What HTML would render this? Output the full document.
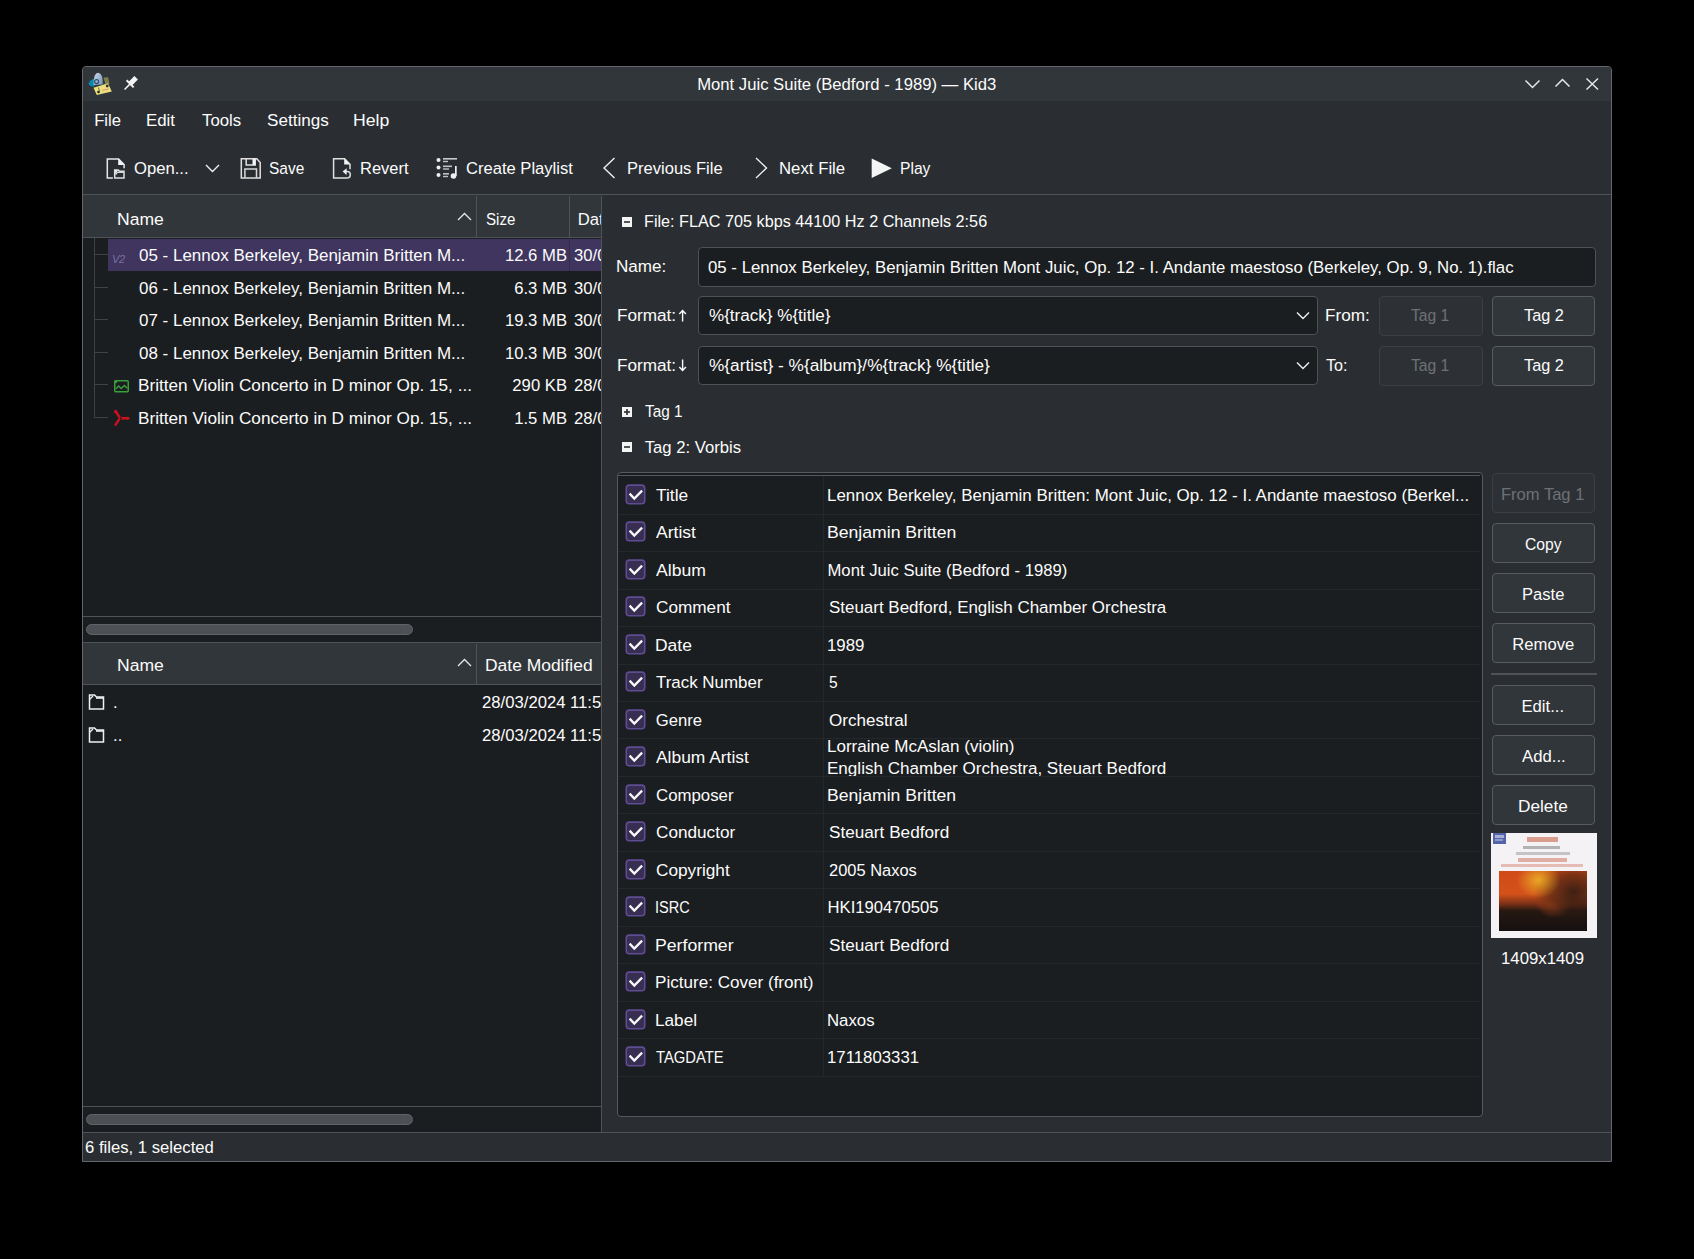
<!DOCTYPE html>
<html><head><meta charset="utf-8"><title>Kid3</title>
<style>
html,body{margin:0;padding:0}
body{background:#000;width:1694px;height:1259px;overflow:hidden;position:relative;font-family:"Liberation Sans",sans-serif;font-size:16.67px;color:#fcfcfc}
.a{position:absolute;display:block}
.t{position:absolute;white-space:nowrap;line-height:20px;height:20px}
</style></head><body>
<div class="a" style="left:82px;top:66px;width:1530px;height:1096px;background:#2a2e32;box-sizing:border-box;border:1px solid #63676b;border-radius:4px 4px 0 0"></div>
<div class="a" style="left:83px;top:67px;width:1528px;height:34px;background:#31363b;border-radius:3px 3px 0 0"></div>
<div class="t" style="left:697.20px;top:75px;color:#fcfcfc;">Mont Juic Suite (Bedford - 1989) — Kid3</div>
<svg class="a" style="left:84px;top:68px;" width="32" height="32" viewBox="0 0 32 32">
<defs><linearGradient id="dome" x1="0" y1="0" x2="1" y2="1"><stop offset="0" stop-color="#d0dcea"/><stop offset="1" stop-color="#6f90b8"/></linearGradient></defs>
<path d="M10.5 10.5 Q5.5 12 4.6 15.5 Q5 18.8 10.5 18.6 Z" fill="#0a88aa"/>
<path d="M9.6 17 Q9.4 5 14.2 4.8 Q18.9 5.2 18.9 16.5 Z" fill="url(#dome)"/>
<circle cx="12.6" cy="13.6" r="2" fill="none" stroke="#2f4a6a" stroke-width="1.1"/>
<path d="M19.5 9.5 L24 9.2 L25.5 15.5 L21.5 16.5 Z" fill="#7e8048"/>
<path d="M9.5 19.8 L24 15.2 L27.8 23.5 L12.8 27 Z" fill="#ece07c"/>
<circle cx="14.5" cy="24" r="1.3" fill="#222"/><circle cx="23.2" cy="18" r="1.4" fill="#333"/>
<path d="M15.5 23.5 L14.5 19.5" stroke="#444" stroke-width=".8"/>
<path d="M18.3 22.3 L24.5 21" stroke="#e0907a" stroke-width="1"/></svg>
<svg class="a" style="left:122px;top:75px;" width="17" height="17" viewBox="0 0 17 17">
<g transform="rotate(45 8.5 8.5)">
<rect x="6" y="0.5" width="5" height="8" fill="#f4f4f4"/>
<rect x="3.5" y="8" width="10" height="2" fill="#f4f4f4"/>
<rect x="7.8" y="9" width="1.5" height="8" fill="#f4f4f4"/>
</g></svg>
<svg class="a" style="left:1520px;top:74px;" width="85" height="22" viewBox="0 0 85 22">
<path d="M5.5 6.5 L12.5 13.5 L19.5 6.5" fill="none" stroke="#e6e6e6" stroke-width="1.5"/>
<path d="M35.5 12.5 L42.5 5.5 L49.5 12.5" fill="none" stroke="#e6e6e6" stroke-width="1.5"/>
<path d="M66.5 4.5 L78 15.5 M78 4.5 L66.5 15.5" fill="none" stroke="#e6e6e6" stroke-width="1.5"/></svg>
<div class="t" style="left:94.20px;top:111px;color:#fcfcfc;">File</div>
<div class="t" style="left:146.19px;top:111px;color:#fcfcfc;transform:scaleX(1.0116);transform-origin:0 0;">Edit</div>
<div class="t" style="left:202.00px;top:111px;color:#fcfcfc;transform:scaleX(1.0064);transform-origin:0 0;">Tools</div>
<div class="t" style="left:267.30px;top:111px;color:#fcfcfc;transform:scaleX(1.0258);transform-origin:0 0;">Settings</div>
<div class="t" style="left:353.14px;top:111px;color:#fcfcfc;transform:scaleX(1.0608);transform-origin:0 0;">Help</div>
<div class="t" style="left:134.00px;top:159px;color:#fcfcfc;">Open...</div>
<div class="t" style="left:269.10px;top:159px;color:#fcfcfc;transform:scaleX(0.9284);transform-origin:0 0;">Save</div>
<div class="t" style="left:360.01px;top:159px;color:#fcfcfc;transform:scaleX(0.9891);transform-origin:0 0;">Revert</div>
<div class="t" style="left:465.80px;top:159px;color:#fcfcfc;transform:scaleX(0.9949);transform-origin:0 0;">Create Playlist</div>
<div class="t" style="left:627.11px;top:159px;color:#fcfcfc;transform:scaleX(0.9936);transform-origin:0 0;">Previous File</div>
<div class="t" style="left:778.69px;top:159px;color:#fcfcfc;transform:scaleX(1.0070);transform-origin:0 0;">Next File</div>
<div class="t" style="left:900.26px;top:159px;color:#fcfcfc;transform:scaleX(0.9385);transform-origin:0 0;">Play</div>
<svg class="a" style="left:105px;top:157px;" width="22" height="23" viewBox="0 0 22 23">
<path d="M7.9 20.9 H2.3 V1.9 H13.6 L19.1 7.5 V11.2" fill="none" stroke="#e8e8e8" stroke-width="1.5"/>
<path d="M13.2 1.6 V7.9 H19.4 Z" fill="#f4f4f4"/>
<path d="M9.7 20.9 V12.9 H13.2 L14.6 14.3 H19 V20.9 Z" fill="none" stroke="#e0e0e0" stroke-width="1.5"/>
<path d="M10 13.2 H13 L10.4 17.2 Z" fill="#f4f4f4"/>
<path d="M10.6 17.6 L12.4 15.4 H18.6" fill="none" stroke="#d8d8d8" stroke-width="1.4"/></svg>
<svg class="a" style="left:204px;top:162px;" width="18" height="13" viewBox="0 0 18 13"><path d="M2 3 L8.5 9.5 L15 3" fill="none" stroke="#f0f0f0" stroke-width="1.4"/></svg>
<svg class="a" style="left:239px;top:157px;" width="23" height="23" viewBox="0 0 23 23">
<path d="M2.3 1.7 H17.8 L21.2 5.5 V20.9 H2.3 Z" fill="none" stroke="#e0e0e0" stroke-width="1.5"/>
<path d="M7.2 1.7 V8.1 H16.2 V1.7" fill="none" stroke="#e0e0e0" stroke-width="1.5"/>
<rect x="13.5" y="1.8" width="2.9" height="6.3" fill="#f4f4f4"/>
<path d="M5.9 20.9 V12.1 H17.5 V20.9" fill="none" stroke="#d8d8d8" stroke-width="1.5"/></svg>
<svg class="a" style="left:331px;top:157px;" width="22" height="23" viewBox="0 0 22 23">
<path d="M16.2 20.9 H2.6 V1.8 H13.6 L19 7.3 V12.3" fill="none" stroke="#e0e0e0" stroke-width="1.5"/>
<path d="M13.2 1.6 V7.6 H19.3 Z" fill="#f4f4f4"/>
<path d="M16.2 20.9 A3.15 3.15 0 0 0 16.2 14.6 H15" fill="none" stroke="#d8d8d8" stroke-width="1.5"/>
<path d="M11.6 14.6 L15.6 11.2 V18 Z" fill="#f0f0f0"/></svg>
<svg class="a" style="left:435px;top:156px;" width="24" height="24" viewBox="0 0 24 24">
<circle cx="3.5" cy="4" r="2" fill="#f0f0f0"/><circle cx="3.5" cy="11.5" r="2" fill="#f0f0f0"/><circle cx="3.5" cy="19" r="2" fill="#f0f0f0"/>
<rect x="8" y="2" width="14" height="1.6" fill="#c8c9ca"/><rect x="8" y="4.8" width="5" height="1.4" fill="#c0c1c2"/>
<rect x="8" y="9.5" width="9" height="1.6" fill="#c0c1c2"/><rect x="8" y="12.3" width="6" height="1.4" fill="#c0c1c2"/>
<rect x="8" y="17" width="6" height="1.6" fill="#c0c1c2"/><rect x="8" y="19.8" width="5" height="1.4" fill="#c0c1c2"/>
<rect x="20" y="10" width="1.7" height="10" fill="#f0f0f0"/><circle cx="18.5" cy="20" r="2.8" fill="#f0f0f0"/></svg>
<svg class="a" style="left:600px;top:155px;" width="20" height="26" viewBox="0 0 20 26"><path d="M14.5 3 L4 13 L14.5 23" fill="none" stroke="#f0f0f0" stroke-width="1.4"/></svg>
<svg class="a" style="left:752px;top:155px;" width="20" height="26" viewBox="0 0 20 26"><path d="M4 3 L14.5 13 L4 23" fill="none" stroke="#f0f0f0" stroke-width="1.4"/></svg>
<svg class="a" style="left:870px;top:156px;" width="24" height="24" viewBox="0 0 24 24"><path d="M1.7 2.6 L21.8 12.3 L1.7 22.1 Z" fill="#f4f4f4"/></svg>
<div class="a" style="left:83px;top:194px;width:1528px;height:1px;background:#4f5357;"></div>
<div class="a" style="left:83px;top:195px;width:518px;height:42px;background:#31363b;"></div>
<div class="a" style="left:83px;top:237px;width:518px;height:1px;background:#4f5357;"></div>
<div class="a" style="left:83px;top:238px;width:518px;height:378px;background:#1b1e20;"></div>
<div class="a" style="left:476px;top:196px;width:1px;height:42px;background:#4f5357;"></div>
<div class="a" style="left:569px;top:196px;width:1px;height:42px;background:#4f5357;"></div>
<div class="t" style="left:116.95px;top:210px;color:#fcfcfc;transform:scaleX(1.0541);transform-origin:0 0;">Name</div>
<div class="t" style="left:485.70px;top:210px;color:#fcfcfc;transform:scaleX(0.9086);transform-origin:0 0;">Size</div>
<div class="a" style="left:0;top:0;width:601px;height:1259px;overflow:hidden"><div class="t" style="left:577.70px;top:210px;color:#fcfcfc;">Date Modified</div></div>
<svg class="a" style="left:455px;top:209px;" width="18" height="14" viewBox="0 0 18 14"><path d="M3 11 L9.5 4.5 L16 11" fill="none" stroke="#e8e8e8" stroke-width="1.3"/></svg>
<div class="a" style="left:108px;top:239px;width:493px;height:32px;background:#3f355e;"></div>
<div class="a" style="left:569px;top:238px;width:1px;height:33px;background:#342c4e;"></div>
<div class="a" style="left:94px;top:238px;width:1px;height:180px;background:#3e4246;"></div>
<div class="a" style="left:95px;top:254px;width:13px;height:1px;background:#3e4246;"></div>
<div class="a" style="left:95px;top:287px;width:13px;height:1px;background:#3e4246;"></div>
<div class="a" style="left:95px;top:319px;width:13px;height:1px;background:#3e4246;"></div>
<div class="a" style="left:95px;top:352px;width:13px;height:1px;background:#3e4246;"></div>
<div class="a" style="left:95px;top:384px;width:13px;height:1px;background:#3e4246;"></div>
<div class="a" style="left:95px;top:417px;width:13px;height:1px;background:#3e4246;"></div>
<div class="t" style="left:139.30px;top:246px;color:#fcfcfc;transform:scaleX(1.0195);transform-origin:0 0;">05 - Lennox Berkeley, Benjamin Britten M...</div>
<div class="t" style="left:470px;top:246px;width:97px;text-align:right">12.6 MB</div>
<div class="a" style="left:0;top:0;width:601px;height:1259px;overflow:hidden"><div class="t" style="left:574.00px;top:246px;color:#fcfcfc;">30/03/2024</div></div>
<div class="t" style="left:139.30px;top:279px;color:#fcfcfc;transform:scaleX(1.0195);transform-origin:0 0;">06 - Lennox Berkeley, Benjamin Britten M...</div>
<div class="t" style="left:470px;top:279px;width:97px;text-align:right">6.3 MB</div>
<div class="a" style="left:0;top:0;width:601px;height:1259px;overflow:hidden"><div class="t" style="left:574.00px;top:279px;color:#fcfcfc;">30/03/2024</div></div>
<div class="t" style="left:139.30px;top:311px;color:#fcfcfc;transform:scaleX(1.0195);transform-origin:0 0;">07 - Lennox Berkeley, Benjamin Britten M...</div>
<div class="t" style="left:470px;top:311px;width:97px;text-align:right">19.3 MB</div>
<div class="a" style="left:0;top:0;width:601px;height:1259px;overflow:hidden"><div class="t" style="left:574.00px;top:311px;color:#fcfcfc;">30/03/2024</div></div>
<div class="t" style="left:139.30px;top:344px;color:#fcfcfc;transform:scaleX(1.0195);transform-origin:0 0;">08 - Lennox Berkeley, Benjamin Britten M...</div>
<div class="t" style="left:470px;top:344px;width:97px;text-align:right">10.3 MB</div>
<div class="a" style="left:0;top:0;width:601px;height:1259px;overflow:hidden"><div class="t" style="left:574.00px;top:344px;color:#fcfcfc;">30/03/2024</div></div>
<div class="t" style="left:137.77px;top:376px;color:#fcfcfc;transform:scaleX(1.0317);transform-origin:0 0;">Britten Violin Concerto in D minor Op. 15, ...</div>
<div class="t" style="left:470px;top:376px;width:97px;text-align:right">290 KB</div>
<div class="a" style="left:0;top:0;width:601px;height:1259px;overflow:hidden"><div class="t" style="left:574.00px;top:376px;color:#fcfcfc;">28/03/2024</div></div>
<div class="t" style="left:137.77px;top:409px;color:#fcfcfc;transform:scaleX(1.0317);transform-origin:0 0;">Britten Violin Concerto in D minor Op. 15, ...</div>
<div class="t" style="left:470px;top:409px;width:97px;text-align:right">1.5 MB</div>
<div class="a" style="left:0;top:0;width:601px;height:1259px;overflow:hidden"><div class="t" style="left:574.00px;top:409px;color:#fcfcfc;">28/03/2024</div></div>
<div class="t" style="left:112px;top:252px;color:#7d70a0;font-size:11px;line-height:14px;height:14px;letter-spacing:-0.3px;font-style:italic">V2</div>
<svg class="a" style="left:112px;top:378px;" width="19" height="16" viewBox="0 0 19 16"><rect x="2.75" y="2.75" width="13.5" height="11" rx="1" fill="none" stroke="#3a9e3e" stroke-width="1.5"/>
<path d="M4 10.8 L6.6 8 L9.2 10.6 L12.4 7.4 L15.2 10.2" fill="none" stroke="#3a9e3e" stroke-width="1.4"/>
<rect x="2.5" y="2.5" width="2.5" height="2.5" fill="#3a9e3e"/></svg>
<svg class="a" style="left:112px;top:409px;" width="18" height="18" viewBox="0 0 18 18"><path d="M8 9 L3.5 2 M8 9 L3.5 15.8 M8 9 L16.5 9.3" fill="none" stroke="#cc1020" stroke-width="2.4" stroke-linecap="round"/>
<path d="M3.5 2 L2.5 4 M3.5 2 L5.5 2.5 M16.5 9.3 L15 8 M16.5 9.3 L15 10.6" fill="none" stroke="#cc1020" stroke-width="1.2"/>
<circle cx="8.6" cy="9.2" r="1" fill="#1b1e20"/></svg>
<div class="a" style="left:83px;top:616px;width:518px;height:1px;background:#4f5357;"></div>
<div class="a" style="left:83px;top:617px;width:518px;height:25px;background:#1b1e20;"></div>
<div class="a" style="left:86px;top:624px;width:327px;height:11px;background:#4d5155;box-sizing:border-box;border:1px solid #606467;border-radius:6px"></div>
<div class="a" style="left:83px;top:642px;width:518px;height:1px;background:#4f5357;"></div>
<div class="a" style="left:83px;top:643px;width:518px;height:41px;background:#31363b;"></div>
<div class="a" style="left:83px;top:684px;width:518px;height:1px;background:#4f5357;"></div>
<div class="a" style="left:476px;top:644px;width:1px;height:41px;background:#4f5357;"></div>
<div class="t" style="left:117.35px;top:656px;color:#fcfcfc;transform:scaleX(1.0541);transform-origin:0 0;">Name</div>
<div class="t" style="left:485.15px;top:656px;color:#fcfcfc;transform:scaleX(1.0472);transform-origin:0 0;">Date Modified</div>
<svg class="a" style="left:455px;top:655px;" width="18" height="14" viewBox="0 0 18 14"><path d="M3 11 L9.5 4.5 L16 11" fill="none" stroke="#e8e8e8" stroke-width="1.3"/></svg>
<div class="a" style="left:83px;top:685px;width:518px;height:421px;background:#1b1e20;"></div>
<svg class="a" style="left:88px;top:693px;" width="18" height="18" viewBox="0 0 18 18"><path d="M1.5 2 H6.5 L8.5 4 H15.5 V16 H1.5 Z" fill="none" stroke="#f0f0f0" stroke-width="1.5"/>
<path d="M1.5 6.5 L5 3" stroke="#f0f0f0" stroke-width="1.3"/><path d="M8 5 H15.5" stroke="#f0f0f0" stroke-width="1.6"/></svg>
<div class="t" style="left:113px;top:693px">.</div>
<div class="a" style="left:0;top:0;width:601px;height:1259px;overflow:hidden"><div class="t" style="left:482.10px;top:693px;color:#fcfcfc;">28/03/2024 11:53</div></div>
<svg class="a" style="left:88px;top:726px;" width="18" height="18" viewBox="0 0 18 18"><path d="M1.5 2 H6.5 L8.5 4 H15.5 V16 H1.5 Z" fill="none" stroke="#f0f0f0" stroke-width="1.5"/>
<path d="M1.5 6.5 L5 3" stroke="#f0f0f0" stroke-width="1.3"/><path d="M8 5 H15.5" stroke="#f0f0f0" stroke-width="1.6"/></svg>
<div class="t" style="left:113px;top:726px">..</div>
<div class="a" style="left:0;top:0;width:601px;height:1259px;overflow:hidden"><div class="t" style="left:482.10px;top:726px;color:#fcfcfc;">28/03/2024 11:53</div></div>
<div class="a" style="left:83px;top:1106px;width:518px;height:1px;background:#4f5357;"></div>
<div class="a" style="left:83px;top:1107px;width:518px;height:25px;background:#1b1e20;"></div>
<div class="a" style="left:86px;top:1114px;width:327px;height:11px;background:#4d5155;box-sizing:border-box;border:1px solid #606467;border-radius:6px"></div>
<div class="a" style="left:601px;top:196px;width:1px;height:936px;background:#4f5357;"></div>
<div class="a" style="left:83px;top:1132px;width:1528px;height:1px;background:#4f5357;"></div>
<div class="t" style="left:85.10px;top:1138px;color:#fcfcfc;">6 files, 1 selected</div>
<svg class="a" style="left:622px;top:217px;" width="10" height="10" viewBox="0 0 10 10"><rect x="0" y="0" width="10" height="10" fill="#f4f4f4"/><rect x="2" y="4.2" width="6" height="1.6" fill="#2a2e32"/></svg>
<div class="t" style="left:644.23px;top:212px;color:#fcfcfc;transform:scaleX(0.9727);transform-origin:0 0;">File: FLAC 705 kbps 44100 Hz 2 Channels 2:56</div>
<div class="t" style="left:616.47px;top:257px;color:#fcfcfc;transform:scaleX(1.0268);transform-origin:0 0;">Name:</div>
<div class="a" style="left:698px;top:247px;width:898px;height:40px;background:#1b1e20;box-sizing:border-box;border:1px solid #4e5256;border-radius:4px"></div>
<div class="t" style="left:708.20px;top:258px;color:#fcfcfc;transform:scaleX(1.0091);transform-origin:0 0;">05 - Lennox Berkeley, Benjamin Britten Mont Juic, Op. 12 - I. Andante maestoso (Berkeley, Op. 9, No. 1).flac</div>
<div class="t" style="left:616.77px;top:306px;color:#fcfcfc;transform:scaleX(1.0296);transform-origin:0 0;">Format:</div>
<svg class="a" style="left:678px;top:309px;" width="10" height="14" viewBox="0 0 10 14"><path d="M4.6 1.5 V12.6 M1.3 5 L4.6 1.5 L7.9 5" fill="none" stroke="#fcfcfc" stroke-width="1.4"/></svg>
<div class="a" style="left:698px;top:296px;width:620px;height:39px;background:#1b1e20;box-sizing:border-box;border:1px solid #4e5256;border-radius:4px"></div>
<div class="t" style="left:708.50px;top:306px;color:#fcfcfc;transform:scaleX(1.0240);transform-origin:0 0;">%{track} %{title}</div>
<svg class="a" style="left:1295px;top:310px;" width="16" height="11" viewBox="0 0 16 11"><path d="M2 2.5 L8 8.5 L14 2.5" fill="none" stroke="#f0f0f0" stroke-width="1.4"/></svg>
<div class="t" style="left:1325.37px;top:306px;color:#fcfcfc;transform:scaleX(1.0320);transform-origin:0 0;">From:</div>
<div class="a" style="left:1379px;top:296px;width:104px;height:40px;background:#2d3135;box-sizing:border-box;border:1px solid #3c4044;border-radius:4px"></div>
<div class="t" style="left:1411.00px;top:306px;color:#6d7175;transform:scaleX(0.9387);transform-origin:0 0;">Tag 1</div>
<div class="a" style="left:1492px;top:296px;width:103px;height:40px;background:#31363b;box-sizing:border-box;border:1px solid #585c60;border-radius:4px"></div>
<div class="t" style="left:1523.50px;top:306px;color:#fcfcfc;transform:scaleX(0.9758);transform-origin:0 0;">Tag 2</div>
<div class="t" style="left:616.77px;top:356px;color:#fcfcfc;transform:scaleX(1.0296);transform-origin:0 0;">Format:</div>
<svg class="a" style="left:678px;top:359px;" width="10" height="14" viewBox="0 0 10 14"><path d="M4.6 0.4 V11.5 M1.3 8 L4.6 11.5 L7.9 8" fill="none" stroke="#fcfcfc" stroke-width="1.4"/></svg>
<div class="a" style="left:698px;top:346px;width:620px;height:39px;background:#1b1e20;box-sizing:border-box;border:1px solid #4e5256;border-radius:4px"></div>
<div class="t" style="left:708.50px;top:356px;color:#fcfcfc;transform:scaleX(1.0353);transform-origin:0 0;">%{artist} - %{album}/%{track} %{title}</div>
<svg class="a" style="left:1295px;top:360px;" width="16" height="11" viewBox="0 0 16 11"><path d="M2 2.5 L8 8.5 L14 2.5" fill="none" stroke="#f0f0f0" stroke-width="1.4"/></svg>
<div class="t" style="left:1326.40px;top:356px;color:#fcfcfc;transform:scaleX(0.9680);transform-origin:0 0;">To:</div>
<div class="a" style="left:1379px;top:346px;width:104px;height:40px;background:#2d3135;box-sizing:border-box;border:1px solid #3c4044;border-radius:4px"></div>
<div class="t" style="left:1411.00px;top:356px;color:#6d7175;transform:scaleX(0.9387);transform-origin:0 0;">Tag 1</div>
<div class="a" style="left:1492px;top:346px;width:103px;height:40px;background:#31363b;box-sizing:border-box;border:1px solid #585c60;border-radius:4px"></div>
<div class="t" style="left:1523.50px;top:356px;color:#fcfcfc;transform:scaleX(0.9758);transform-origin:0 0;">Tag 2</div>
<svg class="a" style="left:622px;top:407px;" width="10" height="10" viewBox="0 0 10 10"><rect x="0" y="0" width="10" height="10" fill="#f4f4f4"/><rect x="2" y="4.2" width="6" height="1.6" fill="#2a2e32"/><rect x="4.2" y="2" width="1.6" height="6" fill="#2a2e32"/></svg>
<div class="t" style="left:644.70px;top:402px;color:#fcfcfc;transform:scaleX(0.9214);transform-origin:0 0;">Tag 1</div>
<svg class="a" style="left:622px;top:442px;" width="10" height="10" viewBox="0 0 10 10"><rect x="0" y="0" width="10" height="10" fill="#f4f4f4"/><rect x="2" y="4.2" width="6" height="1.6" fill="#2a2e32"/></svg>
<div class="t" style="left:644.70px;top:438px;color:#fcfcfc;">Tag 2: Vorbis</div>
<div class="a" style="left:617px;top:472px;width:866px;height:645px;background:#1b1e20;box-sizing:border-box;border:1px solid #55595d;border-radius:4px"></div>
<div class="a" style="left:618px;top:475px;width:862px;height:1px;background:#55595d;"></div>
<div class="a" style="left:823px;top:476px;width:1px;height:600px;background:#25282b;"></div>
<div class="a" style="left:618px;top:514px;width:862px;height:1px;background:#25282b;"></div>
<svg class="a" style="left:625px;top:484px;" width="21" height="21" viewBox="0 0 21 21"><rect x="1.3" y="1.1" width="18.4" height="18.6" rx="3" fill="#372e52" stroke="#5f4c94" stroke-width="1.6"/><path d="M4.6 9.6 L9.3 14.6 L17.1 6.6" fill="none" stroke="#f8f8f8" stroke-width="2.3"/></svg>
<div class="t" style="left:655.70px;top:486px;color:#fcfcfc;transform:scaleX(1.0430);transform-origin:0 0;">Title</div>
<div class="t" style="left:827.48px;top:486px;color:#fcfcfc;transform:scaleX(1.0160);transform-origin:0 0;">Lennox Berkeley, Benjamin Britten: Mont Juic, Op. 12 - I. Andante maestoso (Berkel...</div>
<div class="a" style="left:618px;top:551px;width:862px;height:1px;background:#25282b;"></div>
<svg class="a" style="left:625px;top:521px;" width="21" height="21" viewBox="0 0 21 21"><rect x="1.3" y="1.1" width="18.4" height="18.6" rx="3" fill="#372e52" stroke="#5f4c94" stroke-width="1.6"/><path d="M4.6 9.6 L9.3 14.6 L17.1 6.6" fill="none" stroke="#f8f8f8" stroke-width="2.3"/></svg>
<div class="t" style="left:655.70px;top:523px;color:#fcfcfc;transform:scaleX(1.0519);transform-origin:0 0;">Artist</div>
<div class="t" style="left:827.44px;top:523px;color:#fcfcfc;transform:scaleX(1.0575);transform-origin:0 0;">Benjamin Britten</div>
<div class="a" style="left:618px;top:589px;width:862px;height:1px;background:#25282b;"></div>
<svg class="a" style="left:625px;top:559px;" width="21" height="21" viewBox="0 0 21 21"><rect x="1.3" y="1.1" width="18.4" height="18.6" rx="3" fill="#372e52" stroke="#5f4c94" stroke-width="1.6"/><path d="M4.6 9.6 L9.3 14.6 L17.1 6.6" fill="none" stroke="#f8f8f8" stroke-width="2.3"/></svg>
<div class="t" style="left:655.70px;top:561px;color:#fcfcfc;transform:scaleX(1.0575);transform-origin:0 0;">Album</div>
<div class="t" style="left:827.50px;top:561px;color:#fcfcfc;">Mont Juic Suite (Bedford - 1989)</div>
<div class="a" style="left:618px;top:626px;width:862px;height:1px;background:#25282b;"></div>
<svg class="a" style="left:625px;top:596px;" width="21" height="21" viewBox="0 0 21 21"><rect x="1.3" y="1.1" width="18.4" height="18.6" rx="3" fill="#372e52" stroke="#5f4c94" stroke-width="1.6"/><path d="M4.6 9.6 L9.3 14.6 L17.1 6.6" fill="none" stroke="#f8f8f8" stroke-width="2.3"/></svg>
<div class="t" style="left:655.70px;top:598px;color:#fcfcfc;transform:scaleX(1.0321);transform-origin:0 0;">Comment</div>
<div class="t" style="left:828.50px;top:598px;color:#fcfcfc;transform:scaleX(1.0176);transform-origin:0 0;">Steuart Bedford, English Chamber Orchestra</div>
<div class="a" style="left:618px;top:664px;width:862px;height:1px;background:#25282b;"></div>
<svg class="a" style="left:625px;top:634px;" width="21" height="21" viewBox="0 0 21 21"><rect x="1.3" y="1.1" width="18.4" height="18.6" rx="3" fill="#372e52" stroke="#5f4c94" stroke-width="1.6"/><path d="M4.6 9.6 L9.3 14.6 L17.1 6.6" fill="none" stroke="#f8f8f8" stroke-width="2.3"/></svg>
<div class="t" style="left:654.65px;top:636px;color:#fcfcfc;transform:scaleX(1.0466);transform-origin:0 0;">Date</div>
<div class="t" style="left:827.49px;top:636px;color:#fcfcfc;transform:scaleX(1.0114);transform-origin:0 0;">1989</div>
<div class="a" style="left:618px;top:701px;width:862px;height:1px;background:#25282b;"></div>
<svg class="a" style="left:625px;top:671px;" width="21" height="21" viewBox="0 0 21 21"><rect x="1.3" y="1.1" width="18.4" height="18.6" rx="3" fill="#372e52" stroke="#5f4c94" stroke-width="1.6"/><path d="M4.6 9.6 L9.3 14.6 L17.1 6.6" fill="none" stroke="#f8f8f8" stroke-width="2.3"/></svg>
<div class="t" style="left:655.70px;top:673px;color:#fcfcfc;transform:scaleX(1.0157);transform-origin:0 0;">Track Number</div>
<div class="t" style="left:828.50px;top:673px;color:#fcfcfc;transform:scaleX(0.9333);transform-origin:0 0;">5</div>
<div class="a" style="left:618px;top:738px;width:862px;height:1px;background:#25282b;"></div>
<svg class="a" style="left:625px;top:709px;" width="21" height="21" viewBox="0 0 21 21"><rect x="1.3" y="1.1" width="18.4" height="18.6" rx="3" fill="#372e52" stroke="#5f4c94" stroke-width="1.6"/><path d="M4.6 9.6 L9.3 14.6 L17.1 6.6" fill="none" stroke="#f8f8f8" stroke-width="2.3"/></svg>
<div class="t" style="left:655.70px;top:711px;color:#fcfcfc;">Genre</div>
<div class="t" style="left:828.50px;top:711px;color:#fcfcfc;transform:scaleX(1.0233);transform-origin:0 0;">Orchestral</div>
<div class="a" style="left:618px;top:776px;width:862px;height:1px;background:#25282b;"></div>
<svg class="a" style="left:625px;top:746px;" width="21" height="21" viewBox="0 0 21 21"><rect x="1.3" y="1.1" width="18.4" height="18.6" rx="3" fill="#372e52" stroke="#5f4c94" stroke-width="1.6"/><path d="M4.6 9.6 L9.3 14.6 L17.1 6.6" fill="none" stroke="#f8f8f8" stroke-width="2.3"/></svg>
<div class="t" style="left:655.70px;top:748px;color:#fcfcfc;transform:scaleX(1.0449);transform-origin:0 0;">Album Artist</div>
<div class="a" style="left:824px;top:739px;width:655px;height:37px;overflow:hidden">
<div class="t" style="left:3.48px;top:-2px;color:#fcfcfc;transform:scaleX(1.0224);transform-origin:0 0;">Lorraine McAslan (violin)</div>
<div class="t" style="left:3.48px;top:20px;color:#fcfcfc;transform:scaleX(1.0237);transform-origin:0 0;">English Chamber Orchestra, Steuart Bedford</div>
</div>
<div class="a" style="left:618px;top:813px;width:862px;height:1px;background:#25282b;"></div>
<svg class="a" style="left:625px;top:784px;" width="21" height="21" viewBox="0 0 21 21"><rect x="1.3" y="1.1" width="18.4" height="18.6" rx="3" fill="#372e52" stroke="#5f4c94" stroke-width="1.6"/><path d="M4.6 9.6 L9.3 14.6 L17.1 6.6" fill="none" stroke="#f8f8f8" stroke-width="2.3"/></svg>
<div class="t" style="left:655.70px;top:786px;color:#fcfcfc;transform:scaleX(1.0092);transform-origin:0 0;">Composer</div>
<div class="t" style="left:827.44px;top:786px;color:#fcfcfc;transform:scaleX(1.0567);transform-origin:0 0;">Benjamin Britten</div>
<div class="a" style="left:618px;top:851px;width:862px;height:1px;background:#25282b;"></div>
<svg class="a" style="left:625px;top:821px;" width="21" height="21" viewBox="0 0 21 21"><rect x="1.3" y="1.1" width="18.4" height="18.6" rx="3" fill="#372e52" stroke="#5f4c94" stroke-width="1.6"/><path d="M4.6 9.6 L9.3 14.6 L17.1 6.6" fill="none" stroke="#f8f8f8" stroke-width="2.3"/></svg>
<div class="t" style="left:655.70px;top:823px;color:#fcfcfc;transform:scaleX(1.0310);transform-origin:0 0;">Conductor</div>
<div class="t" style="left:828.50px;top:823px;color:#fcfcfc;transform:scaleX(1.0309);transform-origin:0 0;">Steuart Bedford</div>
<div class="a" style="left:618px;top:888px;width:862px;height:1px;background:#25282b;"></div>
<svg class="a" style="left:625px;top:859px;" width="21" height="21" viewBox="0 0 21 21"><rect x="1.3" y="1.1" width="18.4" height="18.6" rx="3" fill="#372e52" stroke="#5f4c94" stroke-width="1.6"/><path d="M4.6 9.6 L9.3 14.6 L17.1 6.6" fill="none" stroke="#f8f8f8" stroke-width="2.3"/></svg>
<div class="t" style="left:655.70px;top:861px;color:#fcfcfc;transform:scaleX(1.0341);transform-origin:0 0;">Copyright</div>
<div class="t" style="left:828.50px;top:861px;color:#fcfcfc;transform:scaleX(0.9880);transform-origin:0 0;">2005 Naxos</div>
<div class="a" style="left:618px;top:926px;width:862px;height:1px;background:#25282b;"></div>
<svg class="a" style="left:625px;top:896px;" width="21" height="21" viewBox="0 0 21 21"><rect x="1.3" y="1.1" width="18.4" height="18.6" rx="3" fill="#372e52" stroke="#5f4c94" stroke-width="1.6"/><path d="M4.6 9.6 L9.3 14.6 L17.1 6.6" fill="none" stroke="#f8f8f8" stroke-width="2.3"/></svg>
<div class="t" style="left:654.83px;top:898px;color:#fcfcfc;transform:scaleX(0.8719);transform-origin:0 0;">ISRC</div>
<div class="t" style="left:827.50px;top:898px;color:#fcfcfc;">HKI190470505</div>
<div class="a" style="left:618px;top:963px;width:862px;height:1px;background:#25282b;"></div>
<svg class="a" style="left:625px;top:934px;" width="21" height="21" viewBox="0 0 21 21"><rect x="1.3" y="1.1" width="18.4" height="18.6" rx="3" fill="#372e52" stroke="#5f4c94" stroke-width="1.6"/><path d="M4.6 9.6 L9.3 14.6 L17.1 6.6" fill="none" stroke="#f8f8f8" stroke-width="2.3"/></svg>
<div class="t" style="left:654.64px;top:936px;color:#fcfcfc;transform:scaleX(1.0613);transform-origin:0 0;">Performer</div>
<div class="t" style="left:828.50px;top:936px;color:#fcfcfc;transform:scaleX(1.0309);transform-origin:0 0;">Steuart Bedford</div>
<div class="a" style="left:618px;top:1001px;width:862px;height:1px;background:#25282b;"></div>
<svg class="a" style="left:625px;top:971px;" width="21" height="21" viewBox="0 0 21 21"><rect x="1.3" y="1.1" width="18.4" height="18.6" rx="3" fill="#372e52" stroke="#5f4c94" stroke-width="1.6"/><path d="M4.6 9.6 L9.3 14.6 L17.1 6.6" fill="none" stroke="#f8f8f8" stroke-width="2.3"/></svg>
<div class="t" style="left:654.67px;top:973px;color:#fcfcfc;transform:scaleX(1.0253);transform-origin:0 0;">Picture: Cover (front)</div>
<div class="a" style="left:618px;top:1038px;width:862px;height:1px;background:#25282b;"></div>
<svg class="a" style="left:625px;top:1009px;" width="21" height="21" viewBox="0 0 21 21"><rect x="1.3" y="1.1" width="18.4" height="18.6" rx="3" fill="#372e52" stroke="#5f4c94" stroke-width="1.6"/><path d="M4.6 9.6 L9.3 14.6 L17.1 6.6" fill="none" stroke="#f8f8f8" stroke-width="2.3"/></svg>
<div class="t" style="left:654.67px;top:1011px;color:#fcfcfc;transform:scaleX(1.0319);transform-origin:0 0;">Label</div>
<div class="t" style="left:827.49px;top:1011px;color:#fcfcfc;transform:scaleX(1.0069);transform-origin:0 0;">Naxos</div>
<div class="a" style="left:618px;top:1076px;width:862px;height:1px;background:#25282b;"></div>
<svg class="a" style="left:625px;top:1046px;" width="21" height="21" viewBox="0 0 21 21"><rect x="1.3" y="1.1" width="18.4" height="18.6" rx="3" fill="#372e52" stroke="#5f4c94" stroke-width="1.6"/><path d="M4.6 9.6 L9.3 14.6 L17.1 6.6" fill="none" stroke="#f8f8f8" stroke-width="2.3"/></svg>
<div class="t" style="left:655.70px;top:1048px;color:#fcfcfc;transform:scaleX(0.8886);transform-origin:0 0;">TAGDATE</div>
<div class="t" style="left:827.49px;top:1048px;color:#fcfcfc;transform:scaleX(1.0074);transform-origin:0 0;">1711803331</div>
<div class="a" style="left:1492px;top:473px;width:103px;height:40px;background:#2d3135;box-sizing:border-box;border:1px solid #3c4044;border-radius:4px"></div>
<div class="t" style="left:1500.61px;top:485px;color:#6d7175;transform:scaleX(0.9932);transform-origin:0 0;">From Tag 1</div>
<div class="a" style="left:1492px;top:523px;width:103px;height:40px;background:#31363b;box-sizing:border-box;border:1px solid #585c60;border-radius:4px"></div>
<div class="t" style="left:1525.00px;top:535px;color:#fcfcfc;transform:scaleX(0.9405);transform-origin:0 0;">Copy</div>
<div class="a" style="left:1492px;top:573px;width:103px;height:40px;background:#31363b;box-sizing:border-box;border:1px solid #585c60;border-radius:4px"></div>
<div class="t" style="left:1521.81px;top:585px;color:#fcfcfc;transform:scaleX(0.9945);transform-origin:0 0;">Paste</div>
<div class="a" style="left:1492px;top:623px;width:103px;height:40px;background:#31363b;box-sizing:border-box;border:1px solid #585c60;border-radius:4px"></div>
<div class="t" style="left:1512.30px;top:635px;color:#fcfcfc;">Remove</div>
<div class="a" style="left:1492px;top:685px;width:103px;height:40px;background:#31363b;box-sizing:border-box;border:1px solid #585c60;border-radius:4px"></div>
<div class="t" style="left:1521.50px;top:697px;color:#fcfcfc;">Edit...</div>
<div class="a" style="left:1492px;top:735px;width:103px;height:40px;background:#31363b;box-sizing:border-box;border:1px solid #585c60;border-radius:4px"></div>
<div class="t" style="left:1521.70px;top:747px;color:#fcfcfc;transform:scaleX(1.0049);transform-origin:0 0;">Add...</div>
<div class="a" style="left:1492px;top:785px;width:103px;height:40px;background:#31363b;box-sizing:border-box;border:1px solid #585c60;border-radius:4px"></div>
<div class="t" style="left:1518.27px;top:797px;color:#fcfcfc;transform:scaleX(1.0345);transform-origin:0 0;">Delete</div>
<div class="a" style="left:1491px;top:673px;width:106px;height:2px;background:#4f5357;"></div>
<div class="a" style="left:1491px;top:833px;width:106px;height:105px;background:#f4f2f4;overflow:hidden">
<div class="a" style="left:2px;top:0px;width:13px;height:11px;background:#5563a8"></div>
<div class="a" style="left:4px;top:2px;width:9px;height:3px;background:#c8d0f0;opacity:.7"></div>
<div class="a" style="left:4px;top:6px;width:8px;height:2px;background:#c8d0f0;opacity:.5"></div>
<div class="a" style="left:36px;top:4px;width:31px;height:5px;background:#c04a2a;opacity:.5"></div>
<div class="a" style="left:32px;top:13px;width:37px;height:3px;background:#222;opacity:.3"></div>
<div class="a" style="left:25px;top:19px;width:54px;height:3px;background:#222;opacity:.22"></div>
<div class="a" style="left:27px;top:25px;width:49px;height:4px;background:#c0401e;opacity:.38"></div>
<div class="a" style="left:10px;top:31px;width:82px;height:3px;background:#c0401e;opacity:.3"></div>
<div class="a" style="left:8px;top:38px;width:88px;height:60px;background:linear-gradient(180deg,#d04a18 0%,#d4521a 38%,#7a3016 55%,#261812 66%,#161010 100%)"></div>
<div class="a" style="left:8px;top:38px;width:88px;height:60px;background:radial-gradient(ellipse 22px 18px at 45% 15%,rgba(240,190,40,.8) 0%,rgba(230,150,30,0) 100%),radial-gradient(ellipse 40px 30px at 85% 35%,rgba(45,26,18,.9) 0%,rgba(45,26,18,.5) 60%,rgba(45,26,18,0) 100%),radial-gradient(ellipse 18px 14px at 62% 55%,rgba(200,80,26,.7) 0%,rgba(200,80,26,0) 100%)"></div>
</div>
<div class="t" style="left:1501.49px;top:949px;color:#fcfcfc;transform:scaleX(1.0065);transform-origin:0 0;">1409x1409</div>
</body></html>
